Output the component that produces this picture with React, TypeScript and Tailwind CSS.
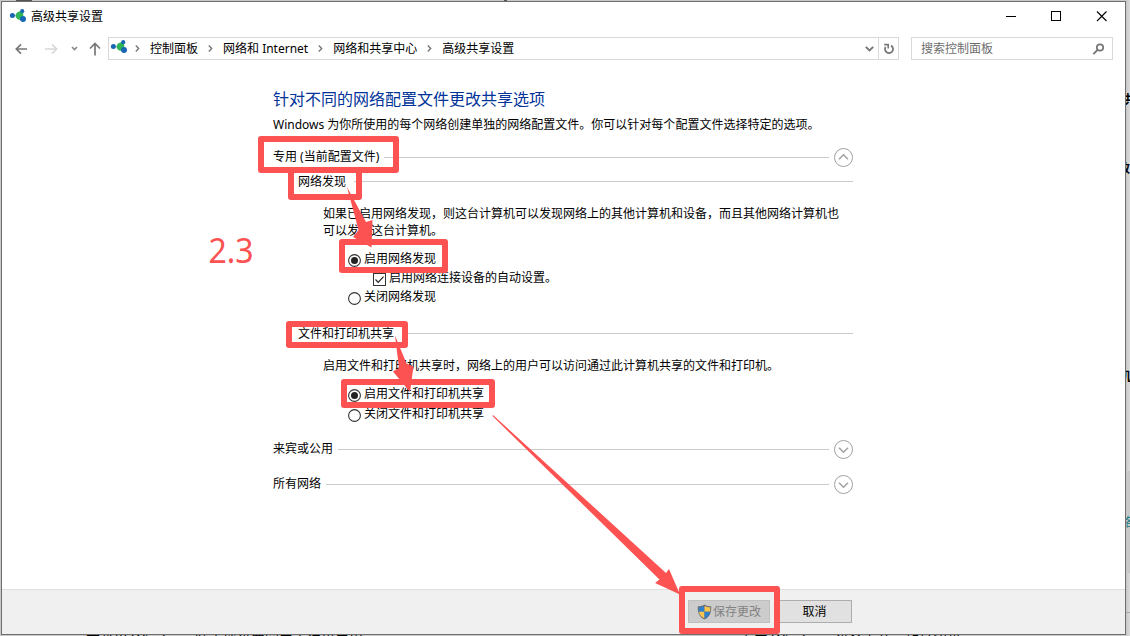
import type { ReactNode } from "react";
import clsx from "clsx";

const BREADCRUMBS = ["控制面板", "网络和 Internet", "网络和共享中心", "高级共享设置"];

const NetworkIcon = ({ className }: { className?: string }) => (
  <svg className={clsx("h-[15px] w-[18px] shrink-0", className)} viewBox="0 0 18 15">
    <path d="M3 7.5 11 8M13 3l-2 5 3 3" stroke="#9fb8c8" strokeWidth="1" />
    <circle cx="3.4" cy="7.5" r="2.5" fill="#1767b5" />
    <path
      d="M10.5 3.4c2-.5 3.600.6 3.800 2.600.2 2.700-.8 5.500-3.300 5.800-2.300.2-4.400-1.600-4.400-4 0-2.300 1.500-4 3.900-4.400Z"
      fill="#2fb457"
    />
    <circle cx="13.200" cy="3.200" r="2.100" fill="#1767b5" />
    <circle cx="14" cy="11" r="3" fill="#1767b5" />
  </svg>
);

const Crumb = ({ gap, label }: { gap: string; label: string }) => (
  <>
    <svg className={clsx("h-[7px] w-[5px] shrink-0", gap)} viewBox="0 0 5 7">
      <path d="M.8.6 3.700 3.500.8 6.400" fill="none" stroke="#777" strokeWidth="1.400" />
    </svg>
    <span className="ml-[10px]">{label}</span>
  </>
);

const RoundChevron = ({ up }: { up?: boolean }) => (
  <svg className="mt-px ml-[5px] h-[19px] w-[19px] shrink-0" viewBox="0 0 19 19">
    <circle cx="9.500" cy="9.500" r="9" fill="none" stroke="#a0a0a0" />
    <path
      d={up ? "M5 11.300 9.500 6.800l4.500 4.500" : "M5 7.700 9.500 12.200l4.500-4.500"}
      fill="none"
      stroke="#a0a0a0"
      strokeWidth="1.500"
    />
  </svg>
);

const ProfileHeader = ({ title, open }: { title: string; open?: boolean }) => (
  <div className="flex h-[20px] items-center">
    <span className="mb-[2px] whitespace-nowrap">{title}</span>
    <span className="ml-[5px] h-px flex-1 bg-[#cbcbcb]" />
    <RoundChevron up={open} />
  </div>
);

const SectionHeader = ({ title }: { title: string }) => (
  <div className="flex h-[19px] items-center pl-[25px]">
    <span className="whitespace-nowrap">{title}</span>
    <span className="mb-px ml-[8px] h-px flex-1 bg-[#cbcbcb]" />
  </div>
);

const Radio = ({ label, checked }: { label: string; checked?: boolean }) => (
  <div className="flex h-[18px] items-center pl-[75px]">
    <svg className="mt-[5px] h-[13px] w-[13px] shrink-0" viewBox="0 0 13 13">
      <circle cx="6.500" cy="6.500" r="5.900" fill="#fff" stroke="#333" strokeWidth="1.100" />
      {checked && <circle cx="6.500" cy="6.500" r="3.500" fill="#222" />}
    </svg>
    <span className="ml-[3px]">{label}</span>
  </div>
);

const Checkbox = ({ label }: { label: string }) => (
  <div className="flex h-[18px] items-center pl-[100px]">
    <svg className="mt-[5px] h-[13px] w-[13px] shrink-0" viewBox="0 0 13 13">
      <rect x=".5" y=".5" width="12" height="12" fill="#fff" stroke="#333" />
      <path d="m2.500 6.500 2.700 2.800 5.300-5.600" fill="none" stroke="#222" strokeWidth="1.200" />
    </svg>
    <span className="ml-[3px]">{label}</span>
  </div>
);

const ShieldIcon = () => (
  <svg className="h-[16px] w-[15px] shrink-0" viewBox="0 0 15 16">
    <path d="M7.500.4C5.500 1.800 3.300 2.300.8 2.300c-.2 6 1.200 10.700 6.700 13.300 5.500-2.600 6.900-7.300 6.700-13.300-2.500 0-4.700-.5-6.700-1.900Z" fill="#666b70" />
    <path d="M7.500 1.700v6.100H1.900C1.700 6.500 1.700 5 1.800 3.300c2.100 0 4-.5 5.700-1.600Z" fill="#2f80cf" />
    <path d="M7.500 1.700v6.100h5.600c.2-1.300.2-2.800.1-4.500-2.100 0-4-.5-5.700-1.600Z" fill="#fbc54f" />
    <path d="M7.500 7.800v6.700C4.300 13 2.500 11 1.900 7.800Z" fill="#fbc54f" />
    <path d="M7.500 7.800v6.700c3.200-1.500 5-3.500 5.600-6.700Z" fill="#2f80cf" />
  </svg>
);

const TitleBar = () => (
  <div className="flex h-[30px] shrink-0 items-center">
    <NetworkIcon className="mb-[4px] ml-[7px]" />
    <span className="mb-px ml-[4px]">高级共享设置</span>
    <svg className="mr-[17px] mb-[2px] ml-auto h-[11px] w-[102px]" viewBox="0 0 102 11" fill="none" stroke="#000">
      <path d="M0 5.500h10" />
      <rect x="45.500" y=".5" width="9" height="9" />
      <path d="m91 .5 9.500 9.500m0-9.500-9.500 9.500" strokeWidth="1.100" />
    </svg>
  </div>
);

const NavBar = () => (
  <div className="flex h-[33px] shrink-0 items-center">
    <svg className="ml-[13px] h-[14px] w-[88px] shrink-0" viewBox="0 0 88 14" fill="none" strokeWidth="1.700">
      <path d="M12 7H1.500M6 2.300 1.300 7 6 11.700" stroke="#777" />
      <path d="M30 7h11.500M37 2.300 41.700 7 37 11.700" stroke="#d8d8d8" />
      <path d="m57 5 2.500 2.500L62 5" stroke="#888" strokeWidth="1.600" />
      <path d="M80 13.500v-12M75 6.500l5-5 5 5" stroke="#777" />
    </svg>
    <div className="ml-[5px] flex h-[23px] w-[791px] shrink-0 items-center border border-[#d9d9d9]">
      <NetworkIcon className="mb-[4px] ml-px" />
      <Crumb gap="ml-[7px]" label={BREADCRUMBS[0]} />
      <Crumb gap="ml-[10px]" label={BREADCRUMBS[1]} />
      <Crumb gap="ml-[10px]" label={BREADCRUMBS[2]} />
      <Crumb gap="ml-[10px]" label={BREADCRUMBS[3]} />
      <svg className="mr-[4px] ml-auto h-[6px] w-[9px]" viewBox="0 0 9 6">
        <path d="m.8.8 3.700 3.700L8.200.8" fill="none" stroke="#777" strokeWidth="1.900" />
      </svg>
      <div className="flex h-full w-[20px] items-center justify-center border-l border-[#d9d9d9]">
        <svg className="h-[12px] w-[11px]" viewBox="0 0 11 12" fill="none" stroke="#777" strokeWidth="1.800">
          <path d="M8 2.600A4 4 0 1 1 2.600 4" />
          <path d="M1.200 1.600h4v4" strokeWidth="1.600" />
        </svg>
      </div>
    </div>
    <div className="ml-[12px] flex h-[23px] w-[202px] shrink-0 items-center border border-[#d9d9d9] pr-[7px] pl-[9px] text-[#6d6d6d]">
      <span>搜索控制面板</span>
      <svg className="ml-auto h-[12px] w-[13px]" viewBox="0 0 13 12" fill="none" stroke="#777">
        <circle cx="8" cy="4.500" r="3.200" strokeWidth="1.700" />
        <path d="M5.600 6.900 1.300 11.200" strokeWidth="1.900" />
      </svg>
    </div>
  </div>
);

const Button = ({ className, children }: { className: string; children: ReactNode }) => (
  <button type="button" className={clsx("flex h-[23px] items-center justify-center border", className)}>
    {children}
  </button>
);

// Red frames and arrows drawn over the dialog
const Annotations = () => (
  <svg className="pointer-events-none absolute inset-0 h-[636px] w-[1130px]" viewBox="0 0 1130 636">
    <g fill="none" stroke="#fc5252" strokeWidth="6" strokeLinejoin="round">
      <rect x="261" y="139" width="135" height="31" />
      <rect x="291" y="170" width="68" height="27" />
      <rect x="342" y="242" width="103" height="28" />
      <rect x="289" y="324" width="116" height="21" />
      <rect x="344" y="382" width="148" height="23" />
      <rect x="682" y="589" width="95" height="42" />
    </g>
    <g fill="#fc5252">
      <path d="M347 187 366 222 372.500 220 371.500 247.500 353 237 358.500 230Z" />
      <path d="M395 335.500 406.500 363.500 413.500 366.500 410 392 393 371.500 399 368Z" />
      <path d="M493 415 666 573 669 569 680 594.500 655 583 659.500 579.500 492.500 416Z" />
      <text transform="translate(208.500 262.500) scale(.94 1)" fontSize="34">
        2.3
      </text>
    </g>
  </svg>
);

export default function App() {
  return (
    <div className="relative h-[636px] w-[1130px] overflow-hidden bg-[#c9c9c9] pt-px pl-px font-['Noto_Sans','Noto_Sans_CJK_SC',sans-serif] text-[12px] leading-[17px] text-black">
      {/* page left visible behind the dialog */}
      <div className="absolute top-0 right-0 h-[636px] w-[4px] bg-linear-to-r from-[#c6c6c6] to-[#dcdcdc]" />
      <div className="absolute top-[471px] right-0 h-[102px] w-[4px] bg-[#c8c8c8]" />
      <div className="absolute top-[612px] right-0 h-px w-[4px] bg-[#aaa]" />
      <div className="absolute top-0 left-[16px] h-px w-[16px] bg-[#555]" />
      <div className="absolute top-0 left-[504px] h-px w-[3px] bg-[#555]" />
      <span className="absolute top-[91px] left-[1124px] font-bold">共</span>
      <span className="absolute top-[160px] left-[1118px] font-bold">改</span>
      <span className="absolute top-[368px] left-[1119px] font-bold">机</span>
      <span className="absolute top-[514px] left-[1121px] text-[#177a83]">络</span>
      <span className="absolute top-[631px] left-[86px] text-[14px] whitespace-nowrap">在弹出 Windows 防火墙设置窗口中选择启用</span>
      <span className="absolute top-[631px] left-[740px] text-[14px] whitespace-nowrap">看来 Windows 设备上共享的打印机</span>

      <div className="relative flex h-[634px] w-[1125px] flex-col border border-[#6e6e6e] bg-white">
        <TitleBar />
        <NavBar />
        <div className="h-[524px] w-[851px] shrink-0 pt-[22px] pl-[271px]">
          <h1 className="h-[24px] text-[16px] leading-[24px] text-[#003399]">针对不同的网络配置文件更改共享选项</h1>
          <p className="mt-[5px] h-[17px] whitespace-nowrap">
            Windows 为你所使用的每个网络创建单独的网络配置文件。你可以针对每个配置文件选择特定的选项。
          </p>
          <div className="mt-[14px]">
            <ProfileHeader title="专用 (当前配置文件)" open />
            <div className="mt-[5px]">
              <SectionHeader title="网络发现" />
            </div>
            <p className="mt-[14px] pl-[50px] whitespace-nowrap">
              如果已启用网络发现，则这台计算机可以发现网络上的其他计算机和设备，而且其他网络计算机也
              <br />
              可以发现这台计算机。
            </p>
            <div className="mt-[10px] flex flex-col gap-px">
              <Radio label="启用网络发现" checked />
              <Checkbox label="启用网络连接设备的自动设置。" />
              <Radio label="关闭网络发现" />
            </div>
            <div className="mt-[19px]">
              <SectionHeader title="文件和打印机共享" />
            </div>
            <p className="mt-[14px] pl-[50px] whitespace-nowrap">
              启用文件和打印机共享时，网络上的用户可以访问通过此计算机共享的文件和打印机。
            </p>
            <div className="mt-[10px] flex flex-col gap-[2px]">
              <Radio label="启用文件和打印机共享" checked />
              <Radio label="关闭文件和打印机共享" />
            </div>
          </div>
          <div className="mt-[17px] flex flex-col gap-[15px]">
            <ProfileHeader title="来宾或公用" />
            <ProfileHeader title="所有网络" />
          </div>
        </div>
        <div className="flex flex-1 items-start justify-end gap-[7px] border-t border-[#dfdfdf] bg-[#f0f0f0] pt-[10px] pr-[273px]">
          <Button className="w-[82px] border-[#bfbfbf] bg-[#cccccc] text-[#838383]">
            <ShieldIcon />
            <span className="ml-px">保存更改</span>
          </Button>
          <Button className="w-[75px] border-[#adadad] bg-[#e1e1e1]">取消</Button>
        </div>
      </div>
      <Annotations />
    </div>
  );
}
